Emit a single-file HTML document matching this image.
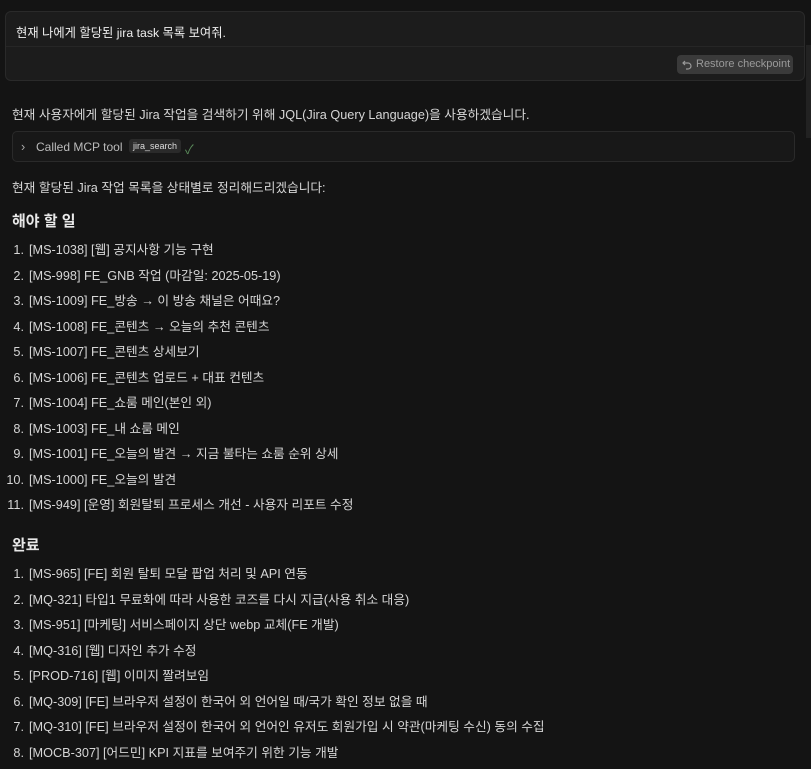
<!DOCTYPE html>
<html><head><meta charset="utf-8"><style>
body{margin:0;background:#141414;width:811px;height:767px;overflow:hidden;font-family:"Liberation Sans","Noto Sans CJK KR",sans-serif;color:#d6d6d6;font-size:12.7px;position:relative}
.card{position:absolute;left:5px;top:11px;width:800px;height:70px;background:#1c1c1c;border:1px solid #2a2a2a;border-radius:6px;box-sizing:border-box}
.card .q{position:absolute;left:10px;top:11px;font-size:12.3px;color:#eee}
.card .div{position:absolute;left:0;right:0;top:34px;border-top:1px solid #262626}
.btn{position:absolute;left:671px;top:43px;width:116px;height:19px;background:#3a3a3a;border-radius:4px;color:#9a9a9a;font-size:11px;line-height:19px;box-sizing:border-box;padding-left:19px;white-space:nowrap;overflow:hidden}
.btn svg{position:absolute;left:5px;top:4px}
.sb{position:absolute;left:806px;top:45px;width:5px;height:93px;background:#222}
.t{position:absolute;left:12px;white-space:nowrap}
.tool{position:absolute;left:12px;top:131px;width:783px;height:31px;border:1px solid #2a2a2a;background:#181818;border-radius:5px;box-sizing:border-box}
.tool span{position:absolute;top:8px;white-space:nowrap}
.tag{background:#2a2a2a;border-radius:3px;font-size:9px;padding:2px 4px;color:#ddd}
h3{position:absolute;left:12px;margin:0;font-size:15px;color:#e8e8e8;font-weight:bold}
ol{position:absolute;left:0;margin:0;padding:0;list-style:none}
ol li{height:25.5px;line-height:18px;white-space:nowrap}
ol li b{display:inline-block;width:24px;text-align:right;font-weight:normal;margin-right:5px}
</style></head><body>
<div class="card"><div class="q">현재 나에게 할당된 jira task 목록 보여줘.</div><div class="div"></div>
<div class="btn"><svg width="11" height="11" viewBox="0 0 11 11" fill="none" stroke="#9a9a9a" stroke-width="1.2"><path d="M3 2L1 4l2 2M1 4h5a3 3 0 010 6H4"/></svg>Restore checkpoint</div></div>
<div class="sb"></div>
<div class="t" style="top:104px">현재 사용자에게 할당된 Jira 작업을 검색하기 위해 JQL(Jira Query Language)을 사용하겠습니다.</div>
<div class="tool"><span style="left:8px;color:#aaa">›</span><span style="left:23px;color:#bbb;font-size:12px">Called MCP tool</span><span style="left:116px;top:7px" class="tag">jira_search</span><span style="left:172px;top:7px;color:#5a8a5a">✓</span></div>
<div class="t" style="top:177px">현재 할당된 Jira 작업 목록을 상태별로 정리해드리겠습니다:</div>
<h3 style="top:210px">해야 할 일</h3>
<ol style="top:241px">
<li><b>1.</b>[MS-1038] [웹] 공지사항 기능 구현</li>
<li><b>2.</b>[MS-998] FE_GNB 작업 (마감일: 2025-05-19)</li>
<li><b>3.</b>[MS-1009] FE_방송 → 이 방송 채널은 어때요?</li>
<li><b>4.</b>[MS-1008] FE_콘텐츠 → 오늘의 추천 콘텐츠</li>
<li><b>5.</b>[MS-1007] FE_콘텐츠 상세보기</li>
<li><b>6.</b>[MS-1006] FE_콘텐츠 업로드 + 대표 컨텐츠</li>
<li><b>7.</b>[MS-1004] FE_쇼룸 메인(본인 외)</li>
<li><b>8.</b>[MS-1003] FE_내 쇼룸 메인</li>
<li><b>9.</b>[MS-1001] FE_오늘의 발견 → 지금 불타는 쇼룸 순위 상세</li>
<li><b>10.</b>[MS-1000] FE_오늘의 발견</li>
<li><b>11.</b>[MS-949] [운영] 회원탈퇴 프로세스 개선 - 사용자 리포트 수정</li>
</ol>
<h3 style="top:534px">완료</h3>
<ol style="top:565px">
<li><b>1.</b>[MS-965] [FE] 회원 탈퇴 모달 팝업 처리 및 API 연동</li>
<li><b>2.</b>[MQ-321] 타입1 무료화에 따라 사용한 코즈를 다시 지급(사용 취소 대응)</li>
<li><b>3.</b>[MS-951] [마케팅] 서비스페이지 상단 webp 교체(FE 개발)</li>
<li><b>4.</b>[MQ-316] [웹] 디자인 추가 수정</li>
<li><b>5.</b>[PROD-716] [웹] 이미지 짤려보임</li>
<li><b>6.</b>[MQ-309] [FE] 브라우저 설정이 한국어 외 언어일 때/국가 확인 정보 없을 때</li>
<li><b>7.</b>[MQ-310] [FE] 브라우저 설정이 한국어 외 언어인 유저도 회원가입 시 약관(마케팅 수신) 동의 수집</li>
<li><b>8.</b>[MOCB-307] [어드민] KPI 지표를 보여주기 위한 기능 개발</li>
</ol>
</body></html>
